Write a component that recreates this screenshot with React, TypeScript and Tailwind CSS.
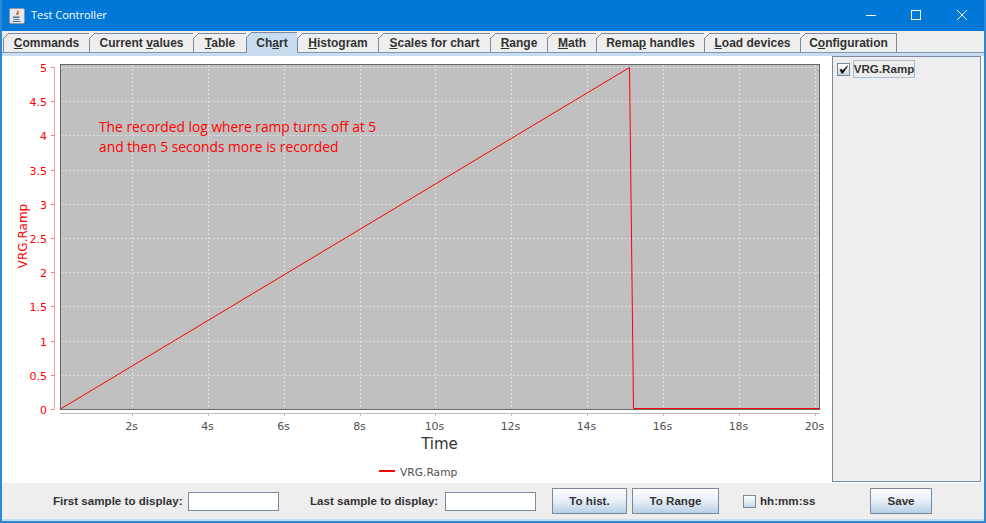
import React from "react";

const tabs: { pre: string; key: string; post: string; width: number; active?: boolean }[] = [
  { pre: "", key: "C", post: "ommands", width: 86 },
  { pre: "Current ", key: "v", post: "alues", width: 104 },
  { pre: "", key: "T", post: "able", width: 53 },
  { pre: "Ch", key: "a", post: "rt", width: 51, active: true },
  { pre: "", key: "H", post: "istogram", width: 81 },
  { pre: "", key: "S", post: "cales for chart", width: 112 },
  { pre: "", key: "R", post: "ange", width: 57 },
  { pre: "", key: "M", post: "ath", width: 49 },
  { pre: "Rema", key: "p", post: " handles", width: 108 },
  { pre: "", key: "L", post: "oad devices", width: 96 },
  { pre: "C", key: "o", post: "nfiguration", width: 97 },
];

const yTicks = ["5", "4.5", "4", "3.5", "3", "2.5", "2", "1.5", "1", "0.5", "0"];
const xTicks = ["2s", "4s", "6s", "8s", "10s", "12s", "14s", "16s", "18s", "20s"];
const xPos = [132.5, 208.5, 284.5, 360.5, 435.5, 511.5, 587.5, 663.5, 739.5, 815.5];

const JavaIcon = () => (
  <svg width="16" height="16" viewBox="0 0 16 16" className="mr-[5px]">
    <rect x="0.5" y="0.5" width="15" height="15" rx="1.5" fill="#e4e8ee" stroke="#8d99a8" />
    <path d="M8.500 2.500c1.500 1.500-2 2.500-.5 4.500M10 4c-1 1-2 1.500-.8 3" fill="none" stroke="#d8632a" strokeWidth="1.100" />
    <path d="M4 8.500h6.500v1.500H4zM4.500 11h6v1h-6zM3.500 13h8v1h-8z" fill="#4a7296" />
  </svg>
);

const CheckMark = () => (
  <svg width="11" height="11" viewBox="0 0 11 11">
    <path d="M1.500 5.500L3.800 5 4.500 6.500 9.500 1.500 9.800 2.500 5 9.500H3.500z" fill="#111111" />
  </svg>
);

const Chart = () => (
  <svg width="830" height="427" viewBox="2 56 830 427" className="block" fontFamily="'DejaVu Sans', sans-serif">
    <rect x="60.500" y="64.500" width="759" height="345" fill="#c0c0c0" stroke="#666666" />
    {yTicks.map((t, i) => {
      const y = Math.round(67 + i * 34.2) + 0.5;
      return (
        <g key={t}>
          {i < 10 && <line x1="61" x2="819" y1={y} y2={y} stroke="#dedede" strokeDasharray="2 2" />}
          <line x1="51" x2="55" y1={y} y2={y} stroke="#f08080" />
          <text x="47" y={y + 4} textAnchor="end" fontSize="11" fill="#ff0000">{t}</text>
        </g>
      );
    })}
    <line x1="54.500" x2="54.500" y1="67" y2="410" stroke="#f4a0a0" />
    {xTicks.map((t, i) => (
      <g key={t}>
        <line x1={xPos[i]} x2={xPos[i]} y1="65" y2="409" stroke="#dedede" strokeDasharray="2 2" />
        <line x1={xPos[i]} x2={xPos[i]} y1="413" y2="416" stroke="#b8b8b8" />
        <text x={xPos[i] - 1} y="430" textAnchor="middle" fontSize="11" fill="#505050">{t}</text>
      </g>
    ))}
    <line x1="60" x2="820" y1="413.500" y2="413.500" stroke="#b8b8b8" />
    <polyline points="60.500,409 629.500,67.500 633.500,408.500 819,408.500" fill="none" stroke="#ff0000" />
    <text x="99" y="132" fontSize="13.800" fill="#ff0000" fontFamily="'Open Sans', sans-serif">The recorded log where ramp turns off at 5</text>
    <text x="99" y="152" fontSize="13.800" fill="#ff0000" fontFamily="'Open Sans', sans-serif">and then 5 seconds more is recorded</text>
    <text transform="translate(27 236) rotate(-90)" textAnchor="middle" fontSize="12" fill="#ff0000">VRG.Ramp</text>
    <text x="439.500" y="449" textAnchor="middle" fontSize="15" fill="#333333">Time</text>
    <line x1="379" x2="395" y1="471" y2="471" stroke="#ff0000" strokeWidth="2" />
    <text x="400" y="476" fontSize="10.700" fill="#505050">VRG.Ramp</text>
  </svg>
);

const JButton = ({ label, width }: { label: string; width: string }) => (
  <button className={`${width} h-[26px] border border-[#7a8a9c] bg-gradient-to-b from-[#ffffff] via-[#e6eef6] to-[#b8d0e6] text-[11.6px] font-bold text-[#333333]`}>
    {label}
  </button>
);

const JField = () => <div className="h-[19px] w-[91px] border border-[#7a8a9c] bg-white" />;

export default function App() {
  return (
    <div className="flex h-[523px] w-[986px] flex-col overflow-hidden border-x-2 border-b-2 border-[#2b88d8] bg-[#eeeeee] font-['Liberation_Sans',sans-serif] text-[#333333]">
      {/* title bar */}
      <div className="flex h-[31px] shrink-0 items-center bg-[#0078d7] pl-[7px] text-white">
        <JavaIcon />
        <span className="ml-px font-['Open_Sans',sans-serif] text-[11px]">Test Controller</span>
        <div className="ml-auto flex items-center">
          <svg width="46" height="31" viewBox="0 0 46 31"><line x1="20" x2="30" y1="15.500" y2="15.500" stroke="#ffffff" /></svg>
          <svg width="46" height="31" viewBox="0 0 46 31"><rect x="19.500" y="10.500" width="9" height="9" fill="none" stroke="#ffffff" /></svg>
          <svg width="46" height="31" viewBox="0 0 46 31"><path d="M19 10l10 10M29 10l-10 10" stroke="#ffffff" fill="none" /></svg>
        </div>
      </div>

      {/* tab strip */}
      <div className="flex h-[25px] shrink-0 flex-col">
        <div className="flex h-[22px] items-end border-b border-[#7f96b8] pl-px">
          {tabs.map((t, i) => (
            <div
              key={t.key + t.post}
              style={{ width: t.width }}
              className={`relative flex shrink-0 items-center justify-center border-t border-l border-[#7a8a9c] text-[12px] font-bold ${i === tabs.length - 1 ? "border-r" : ""} ${t.active ? "z-10 -mb-px h-[21px] bg-[#c8dcf0] pb-px" : "h-[19px] bg-[#eeeeee]"}`}
            >
              <svg width="6" height="6" viewBox="0 0 6 6" className="absolute -top-px -left-px">
                <path d="M0 0H6L0 6z" fill="#eeeeee" />
                <path d="M0 6L6 0" stroke="#7a8a9c" />
              </svg>
              <span className="whitespace-pre">{t.pre}<u>{t.key}</u>{t.post}</span>
            </div>
          ))}
        </div>
        <div className="h-[3px] bg-[#c8dcf0]" />
      </div>

      {/* chart + series list */}
      <div className="flex min-h-0 flex-1 bg-white">
        <Chart />
        <div className="mr-[3px] mb-px flex-1 border border-[#7a8a9c] bg-[#eeeeee] pt-[3px] pl-[4px]">
          <div className="flex items-center">
            <div className="flex h-[13px] w-[13px] items-center justify-center border border-[#7a8a9c] bg-gradient-to-b from-[#ffffff] to-[#c8d8e8]">
              <CheckMark />
            </div>
            <span className="ml-[3px] flex h-[18px] w-[62px] items-center justify-center border border-[#a9bdd0] text-[11.6px] font-bold">VRG.Ramp</span>
          </div>
        </div>
      </div>

      {/* bottom controls */}
      <div className="flex h-[38px] shrink-0 items-center border-b-2 border-[#c8dcf0] text-[11.6px] font-bold">
        <span className="ml-[51px] w-[130px] whitespace-nowrap">First sample to display:</span>
        <div className="ml-[5px]"><JField /></div>
        <span className="ml-[31px] w-[130px] whitespace-nowrap">Last sample to display:</span>
        <div className="ml-[5px]"><JField /></div>
        <div className="ml-[16px]"><JButton label="To hist." width="w-[75px]" /></div>
        <div className="ml-[5px]"><JButton label="To Range" width="w-[87px]" /></div>
        <div className="ml-[24px] h-[13px] w-[13px] border border-[#7a8a9c] bg-gradient-to-b from-[#ffffff] to-[#c8d8e8]" />
        <span className="ml-[4px] w-[56px]">hh:mm:ss</span>
        <div className="ml-[54px]"><JButton label="Save" width="w-[62px]" /></div>
      </div>
    </div>
  );
}
